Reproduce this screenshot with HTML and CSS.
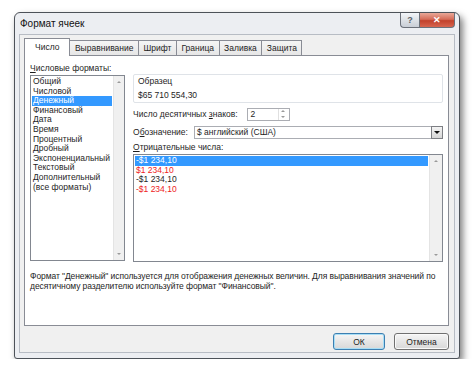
FILE: index.html
```html
<!DOCTYPE html>
<html lang="ru">
<head>
  <meta charset="UTF-8" />
  <title>Формат ячеек</title>
  <link rel="stylesheet" href="styles.css">
</head>
<body>
  <div class="window">
    <div class="titlebar">
      <span class="title">Формат ячеек</span>
      <div class="caption-buttons">
        <div class="cap-btn help">?</div>
        <div class="cap-btn close">&#x2715;</div>
      </div>
    </div>

    <div class="client">
      <div class="tabs">
        <div class="tab active">Число</div>
        <div class="tab">Выравнивание</div>
        <div class="tab">Шрифт</div>
        <div class="tab">Граница</div>
        <div class="tab">Заливка</div>
        <div class="tab">Защита</div>
      </div>

      <div class="panel">
        <div class="columns">
          <div class="left-col">
            <div class="label"><u>Ч</u>исловые форматы:</div>
            <div class="listbox formats">
              <div class="items">
                <div class="item">Общий</div>
                <div class="item">Числовой</div>
                <div class="item selected">Денежный</div>
                <div class="item">Финансовый</div>
                <div class="item">Дата</div>
                <div class="item">Время</div>
                <div class="item">Процентный</div>
                <div class="item">Дробный</div>
                <div class="item">Экспоненциальный</div>
                <div class="item">Текстовый</div>
                <div class="item">Дополнительный</div>
                <div class="item">(все форматы)</div>
              </div>
              <div class="scrollbar">
                <span class="arrow up"></span>
                <span class="arrow down"></span>
              </div>
            </div>
          </div>

          <div class="right-col">
            <div class="sample">
              <div class="sample-title">Образец</div>
              <div class="sample-value">$65 710 554,30</div>
            </div>

            <div class="row spin-row">
              <span>Число десятичных <u>з</u>наков:</span>
              <div class="spin">
                <span class="spin-value">2</span>
                <div class="spin-arrows">
                  <span class="arrow up"></span>
                  <span class="arrow down"></span>
                </div>
              </div>
            </div>

            <div class="row select-row">
              <span>О<u>б</u>означение:</span>
              <div class="select">
                <span class="select-value">$ английский (США)</span>
                <div class="drop-btn"><span class="arrow down dark"></span></div>
              </div>
            </div>

            <div class="label neg-label"><u>О</u>трицательные числа:</div>
            <div class="listbox negatives">
              <div class="items">
                <div class="item selected">-$1 234,10</div>
                <div class="item red">$1 234,10</div>
                <div class="item">-$1 234,10</div>
                <div class="item red">-$1 234,10</div>
              </div>
              <div class="scrollbar">
                <span class="arrow up"></span>
                <span class="arrow down"></span>
              </div>
            </div>
          </div>
        </div>

        <p class="description">Формат "Денежный" используется для отображения денежных величин. Для выравнивания значений по десятичному разделителю используйте формат "Финансовый".</p>
      </div>

      <div class="buttons">
        <div class="btn default">ОК</div>
        <div class="btn">Отмена</div>
      </div>
    </div>
  </div>
</body>
</html>
```

FILE: styles.css
```css
html, body {
  margin: 0;
  padding: 0;
  background: #fff;
  font-family: "Liberation Sans", Arial, sans-serif;
  font-size: 8.5px;
  color: #1e1e1e;
}
u {
  text-decoration: underline;
}
.window {
  box-sizing: border-box;
  width: 446px;
  height: 347px;
  margin: 12px 0 0 14px;
  padding: 0 4px 5px 4px;
  background: #eceef2;
  border: 1px solid #4d5259;
  border-radius: 6px 6px 3px 3px;
  box-shadow: 3px 4px 7px rgba(0, 0, 0, 0.5);
  display: flex;
  flex-direction: column;
}
.titlebar {
  height: 21px;
  display: flex;
  align-items: flex-start;
  flex: none;
}
.title {
  padding: 5px 0 0 1px;
  font-size: 10px;
  color: #111;
}
.caption-buttons {
  margin-left: auto;
  display: flex;
}
.cap-btn {
  box-sizing: border-box;
  height: 15px;
  border: 1px solid #6b7079;
  border-top: none;
  display: flex;
  align-items: center;
  justify-content: center;
  font-weight: bold;
}
.help {
  width: 19px;
  border-radius: 0 0 0 4px;
  border-right: none;
  background: linear-gradient(#f3f5f8, #dde1e6 50%, #c9ced6);
  color: #5a5f66;
  font-size: 9px;
}
.close {
  width: 36px;
  border-radius: 0 0 4px 0;
  background: linear-gradient(#e9a898, #d56c58 45%, #c2412b 55%, #d7654f);
  color: #fff;
  font-size: 9px;
}
.client {
  flex: 1;
  background: #f0f0f0;
  border: 1px solid #b7bcc4;
  padding: 5px 5px 0 4px;
  display: flex;
  flex-direction: column;
}
.tabs {
  display: flex;
  height: 15px;
  flex: none;
  padding-left: 1px;
}
.tab {
  box-sizing: border-box;
  height: 15px;
  padding: 0 4.5px;
  margin-right: -1px;
  border: 1px solid #898c95;
  border-bottom: none;
  background: linear-gradient(#f5f5f5, #e6e6e6);
  line-height: 14px;
  white-space: nowrap;
}
.tab.active {
  position: relative;
  z-index: 1;
  height: 18px;
  margin-top: -2px;
  margin-left: -1px;
  padding: 0 10px;
  background: #fff;
  line-height: 16px;
}
.panel {
  box-sizing: border-box;
  height: 271px;
  flex: none;
  background: #fff;
  border: 1px solid #898c95;
  padding: 7px 5px 0 5px;
}
.columns {
  display: grid;
  grid-template-columns: 95px 310px;
  column-gap: 8px;
}
.label {
  height: 11px;
  line-height: 11px;
}
.listbox {
  box-sizing: border-box;
  border: 1px solid #828790;
  display: flex;
  background: #fff;
}
.formats {
  height: 186px;
  margin-top: 1px;
}
.items {
  flex: 1;
  padding: 1px 1px 0 1px;
}
.item {
  height: 9.6px;
  line-height: 9.6px;
  padding-left: 1px;
  white-space: nowrap;
}
.item.selected {
  background: #3399ff;
  color: #fff;
}
.item.red {
  color: #ee1c1c;
}
.scrollbar {
  width: 10px;
  background: #f0f0f0;
  border-left: 1px solid #e4e4e4;
  display: flex;
  flex-direction: column;
  justify-content: space-between;
  align-items: center;
  padding: 5px 0;
}
.arrow {
  width: 0;
  height: 0;
  border-left: 2.5px solid transparent;
  border-right: 2.5px solid transparent;
}
.arrow.up {
  border-bottom: 2.5px solid #9a9a9a;
}
.arrow.down {
  border-top: 2.5px solid #9a9a9a;
}
.arrow.down.dark {
  border-left-width: 3px;
  border-right-width: 3px;
  border-top: 3px solid #111;
}
.right-col {
  display: flex;
  flex-direction: column;
}
.sample {
  box-sizing: border-box;
  height: 29px;
  margin-top: 11px;
  border: 1px solid #dfe3e8;
  border-radius: 2px;
  padding: 1px 4px;
}
.sample-title {
  line-height: 11px;
}
.sample-value {
  margin-top: 3px;
  line-height: 11px;
}
.row {
  display: flex;
  align-items: center;
  height: 12px;
}
.spin-row {
  margin-top: 5px;
}
.spin {
  box-sizing: border-box;
  width: 43px;
  height: 13px;
  margin-left: 9px;
  border: 1px solid #abadb3;
  display: flex;
  align-items: center;
}
.spin-value {
  flex: 1;
  padding-left: 3px;
}
.spin-arrows {
  width: 9px;
  height: 11px;
  margin-right: 1px;
  border-left: 1px solid #e0e0e0;
  display: flex;
  flex-direction: column;
  justify-content: space-around;
  align-items: center;
}
.select-row {
  margin-top: 6px;
}
.select {
  box-sizing: border-box;
  flex: 1;
  height: 13px;
  margin-left: 6px;
  border: 1px solid #abadb3;
  display: flex;
  align-items: center;
}
.select-value {
  flex: 1;
  padding-left: 2px;
}
.drop-btn {
  box-sizing: border-box;
  width: 12px;
  height: 13px;
  margin: -1px -1px -1px 0;
  border: 1px solid #7d7f84;
  background: linear-gradient(#f4f4f4, #d6d6d6);
  display: flex;
  align-items: center;
  justify-content: center;
}
.neg-label {
  margin-top: 4px;
}
.negatives {
  height: 108px;
  margin-top: 1px;
}
.negatives .scrollbar {
  width: 12px;
}
.description {
  margin: 10px 0 0 0;
  line-height: 9.5px;
  width: 418px;
  letter-spacing: -0.08px;
}
.buttons {
  display: flex;
  justify-content: flex-end;
  gap: 9px;
  margin-top: 7px;
}
.btn {
  box-sizing: border-box;
  height: 17px;
  width: 55px;
  border: 1px solid #707070;
  border-radius: 3px;
  background: linear-gradient(#f6f6f6, #e6e6e6 50%, #d8d8d8);
  display: flex;
  align-items: center;
  justify-content: center;
  box-shadow: inset 0 0 0 1px #fafafa;
}
.btn.default {
  width: 52px;
  border-color: #3c7fb1;
  box-shadow: inset 0 0 0 1px #a8def6;
}
```
